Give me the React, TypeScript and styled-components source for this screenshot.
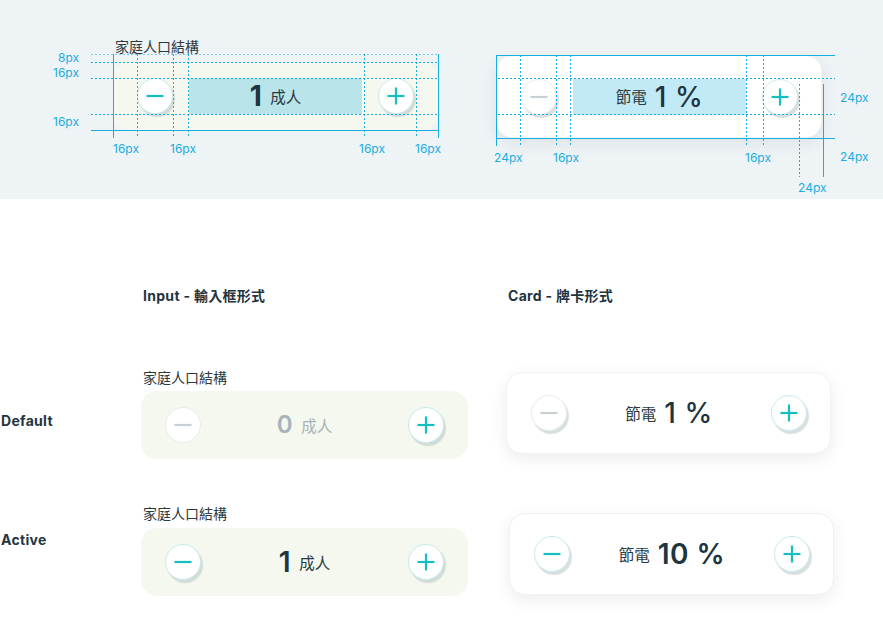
import React from 'react';
import styled, { createGlobalStyle } from 'styled-components';

const GlobalStyle = createGlobalStyle`
  html, body {
    margin: 0;
    padding: 0;
    background: #ffffff;
  }
  body {
    font-family: Inter, "Noto Sans CJK TC", sans-serif;
    color: #1f3540;
  }
`;

const TEAL = '#14bfc3';
const MUTED = '#c8d0d4';
const GUIDE = '#19ade0';

const Page = styled.div`
  width: 883px;
  height: 621px;
  overflow: hidden;
  position: relative;
`;

/* ---------- spec panel (top) ---------- */

const SpecPanel = styled.section`
  position: relative;
  height: 199px;
  background: #eef3f6;
  display: flex;
  align-items: flex-start;
  padding-left: 113px;
  gap: 58px;
  box-sizing: border-box;
`;

const SpecColumn = styled.div<{ $top: number }>`
  display: flex;
  flex-direction: column;
  padding-top: ${p => p.$top}px;
`;

const SpecLabel = styled.div`
  font-size: 14px;
  line-height: 14px;
  height: 14px;
  margin-bottom: 8px;
  padding-left: 2px;
  color: #2d3a40;
`;

const Guide = styled.div<{ $vertical?: boolean; $dotted?: boolean; $faint?: boolean }>`
  position: absolute;
  opacity: ${p => (p.$faint ? 0.55 : 1)};
  background: ${p =>
    p.$dotted
      ? `repeating-linear-gradient(${p.$vertical ? '180deg' : '90deg'}, ${GUIDE} 0 2px, transparent 2px 4px)`
      : GUIDE};
`;

const GuideText = styled.span`
  position: absolute;
  font-size: 12px;
  line-height: 14px;
  color: ${GUIDE};
  white-space: nowrap;
`;

/* ---------- stepper parts ---------- */

const Field = styled.div<{ $width: number }>`
  width: ${p => p.$width}px;
  height: 68px;
  box-sizing: border-box;
  padding: 0 24px;
  border-radius: 16px;
  background: #f4f8ee;
  display: flex;
  align-items: center;
`;

const Card = styled.div<{ $width: number; $height: number }>`
  width: ${p => p.$width}px;
  height: ${p => p.$height}px;
  box-sizing: border-box;
  padding: 0 23px 0 24px;
  border-radius: 16px;
  background: #ffffff;
  border: 1px solid #eef2f3;
  box-shadow: 0 5px 16px rgba(40, 60, 70, 0.09);
  display: flex;
  align-items: center;
`;

const RoundButton = styled.button<{ $teal?: boolean; $flat?: boolean }>`
  flex: none;
  width: 36px;
  height: 36px;
  padding: 0;
  border-radius: 50%;
  background: #ffffff;
  border: 1px solid ${p => (p.$teal ? '#c6ebef' : '#e6ecee')};
  box-shadow: ${p => (p.$flat ? 'none' : '2px 3px 1px rgba(170, 185, 185, 0.45)')};
  display: flex;
  align-items: center;
  justify-content: center;
  cursor: pointer;
`;

const Value = styled.div<{ $fill?: string }>`
  flex: 1;
  height: 36px;
  margin: 0 16px;
  background: ${p => p.$fill || 'transparent'};
  display: flex;
  align-items: center;
  justify-content: center;
  gap: 8px;
`;

const Num = styled.span<{ $size: number; $weight: number; $muted?: boolean }>`
  font-size: ${p => p.$size}px;
  font-weight: ${p => p.$weight};
  line-height: 1;
  letter-spacing: 0.5px;
  color: ${p => (p.$muted ? '#a7b3ba' : '#1d3540')};
`;

const Unit = styled.span<{ $muted?: boolean }>`
  font-size: 15.5px;
  line-height: 1;
  padding-top: 3px;
  color: ${p => (p.$muted ? '#a7b3ba' : '#2a3a42')};
`;

const Icon = ({ plus, color }: { plus?: boolean; color: string }) => (
  <svg width="20" height="20" viewBox="0 0 20 20">
    <line x1="1.5" y1="10" x2="18.5" y2="10" stroke={color} strokeWidth="2.2" />
    {plus && <line x1="10" y1="1.5" x2="10" y2="18.5" stroke={color} strokeWidth="2.2" />}
  </svg>
);

/* ---------- board (bottom) ---------- */

const Board = styled.section`
  padding-top: 88px;
`;

const Row = styled.div<{ $top: number }>`
  display: flex;
  margin-top: ${p => p.$top}px;
`;

const RowLabel = styled.div<{ $top?: number }>`
  width: 140px;
  padding-left: 1px;
  padding-top: ${p => p.$top || 0}px;
  font-size: 14px;
  font-weight: 700;
  line-height: 18px;
  letter-spacing: 0.3px;
  color: #1f3540;
`;

const InputCol = styled.div<{ $gap: number }>`
  width: 327px;
  margin-right: 38px;
  display: flex;
  flex-direction: column;
  gap: ${p => p.$gap}px;
`;

const CardCol = styled.div<{ $top?: number; $left?: number }>`
  padding-top: ${p => p.$top || 0}px;
  padding-left: ${p => p.$left || 0}px;
`;

const Heading = styled.h3`
  margin: 0;
  padding-left: 2px;
  font-size: 14px;
  font-weight: 700;
  line-height: 18px;
  letter-spacing: 0.3px;
  color: #1f3540;
`;

const FieldLabel = styled.div`
  font-size: 14px;
  line-height: 18px;
  padding-left: 2px;
  color: #2d3a40;
`;

type G = [number, number, number, boolean, boolean, boolean?];
// x, y, length, vertical, dotted, faint
const guides: G[] = [
  // input spec
  [91, 54, 347, false, true, true],
  [91, 62, 347, false, true],
  [91, 78, 347, false, true],
  [91, 114, 347, false, true],
  [91, 130, 347, false, false],
  [113, 54, 84, true, false],
  [137, 54, 84, true, true],
  [173, 54, 84, true, true],
  [188, 54, 84, true, true],
  [364, 54, 84, true, true],
  [416, 54, 84, true, true],
  [438, 54, 84, true, false],
  // card spec
  [496, 55, 339, false, false],
  [498, 78, 337, false, true],
  [498, 114, 337, false, true],
  [496, 138, 339, false, false],
  [496, 55, 91, true, false],
  [520, 55, 92, true, true],
  [556, 55, 92, true, true],
  [570, 55, 92, true, true],
  [746, 55, 92, true, true],
  [763, 55, 92, true, true],
  [799, 84, 93, true, true],
  [823, 84, 93, true, false],
];

const guideLabels: [number, number, string][] = [
  [58, 51, '8px'],
  [53, 66, '16px'],
  [53, 115, '16px'],
  [113, 142, '16px'],
  [170, 142, '16px'],
  [359, 142, '16px'],
  [415, 142, '16px'],
  [494, 151, '24px'],
  [553, 151, '16px'],
  [745, 151, '16px'],
  [840, 91, '24px'],
  [840, 150, '24px'],
  [798, 181, '24px'],
];

export default function App() {
  return (
    <Page>
      <GlobalStyle />
      <SpecPanel>
        <SpecColumn $top={40}>
          <SpecLabel>家庭人口結構</SpecLabel>
          <Field $width={325}>
            <RoundButton $teal>
              <Icon color={TEAL} />
            </RoundButton>
            <Value $fill="#b8e4ea">
              <Num $size={28} $weight={700}>1</Num>
              <Unit>成人</Unit>
            </Value>
            <RoundButton $teal>
              <Icon plus color={TEAL} />
            </RoundButton>
          </Field>
        </SpecColumn>
        <SpecColumn $top={55}>
          <Card $width={326} $height={83}>
            <RoundButton>
              <Icon color={MUTED} />
            </RoundButton>
            <Value $fill="#c1e9f6">
              <Unit>節電</Unit>
              <Num $size={28} $weight={500}>1&nbsp;%</Num>
            </Value>
            <RoundButton $teal>
              <Icon plus color={TEAL} />
            </RoundButton>
          </Card>
        </SpecColumn>
        {guides.map(([x, y, len, vertical, dotted, faint], i) => (
          <Guide
            key={i}
            $vertical={vertical}
            $dotted={dotted}
            $faint={faint}
            style={{ left: x, top: y, width: vertical ? 1 : len, height: vertical ? len : 1 }}
          />
        ))}
        {guideLabels.map(([x, y, t], i) => (
          <GuideText key={i} style={{ left: x, top: y }}>
            {t}
          </GuideText>
        ))}
      </SpecPanel>

      <Board>
        <Row $top={0}>
          <RowLabel />
          <InputCol $gap={0}>
            <Heading>Input - 輸入框形式</Heading>
          </InputCol>
          <CardCol>
            <Heading>Card - 牌卡形式</Heading>
          </CardCol>
        </Row>

        <Row $top={64}>
          <RowLabel $top={43}>Default</RowLabel>
          <InputCol $gap={4}>
            <FieldLabel>家庭人口結構</FieldLabel>
            <Field $width={327}>
              <RoundButton $flat>
                <Icon color={MUTED} />
              </RoundButton>
              <Value>
                <Num $size={24} $weight={600} $muted>0</Num>
                <Unit $muted>成人</Unit>
              </Value>
              <RoundButton $teal>
                <Icon plus color={TEAL} />
              </RoundButton>
            </Field>
          </InputCol>
          <CardCol $top={3}>
            <Card $width={325} $height={82}>
              <RoundButton>
                <Icon color={MUTED} />
              </RoundButton>
              <Value>
                <Unit>節電</Unit>
                <Num $size={28} $weight={500}>1&nbsp;%</Num>
              </Value>
              <RoundButton $teal>
                <Icon plus color={TEAL} />
              </RoundButton>
            </Card>
          </CardCol>
        </Row>

        <Row $top={46}>
          <RowLabel $top={26}>Active</RowLabel>
          <InputCol $gap={5}>
            <FieldLabel>家庭人口結構</FieldLabel>
            <Field $width={327}>
              <RoundButton $teal>
                <Icon color={TEAL} />
              </RoundButton>
              <Value>
                <Num $size={28} $weight={600}>1</Num>
                <Unit>成人</Unit>
              </Value>
              <RoundButton $teal>
                <Icon plus color={TEAL} />
              </RoundButton>
            </Field>
          </InputCol>
          <CardCol $top={8} $left={3}>
            <Card $width={325} $height={82}>
              <RoundButton $teal>
                <Icon color={TEAL} />
              </RoundButton>
              <Value>
                <Unit>節電</Unit>
                <Num $size={28} $weight={600}>10&nbsp;%</Num>
              </Value>
              <RoundButton $teal>
                <Icon plus color={TEAL} />
              </RoundButton>
            </Card>
          </CardCol>
        </Row>
      </Board>
    </Page>
  );
}
